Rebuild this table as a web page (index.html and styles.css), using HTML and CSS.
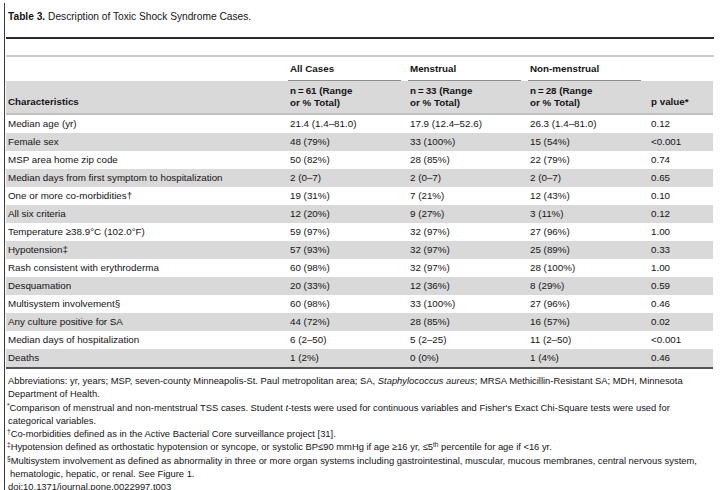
FILE: index.html
```html
<!DOCTYPE html>
<html lang="en">
<head>
<meta charset="utf-8">
<title>Table 3. Description of Toxic Shock Syndrome Cases.</title>
<link rel="stylesheet" href="styles.css">
</head>
<body>
<div class="page">
  <div class="title"><b>Table 3.</b> Description of Toxic Shock Syndrome Cases.</div>
  <div class="rule-dark"></div>
  <div class="rule-light"></div>
  <table class="tbl">
    <colgroup>
      <col class="c1"><col class="c2"><col class="c3"><col class="c4"><col class="c5">
    </colgroup>
    <thead>
      <tr class="groups">
        <th></th>
        <th><div class="grp">All Cases</div></th>
        <th><div class="grp">Menstrual</div></th>
        <th><div class="grp">Non-menstrual</div></th>
        <th></th>
      </tr>
      <tr class="sub">
        <th class="first">Characteristics</th>
        <th>n&#8201;=&#8201;61 (Range<br>or % Total)</th>
        <th>n&#8201;=&#8201;33 (Range<br>or % Total)</th>
        <th>n&#8201;=&#8201;28 (Range<br>or % Total)</th>
        <th class="pv">p value*</th>
      </tr>
    </thead>
    <tbody>
      <tr><td>Median age (yr)</td><td>21.4 (1.4–81.0)</td><td>17.9 (12.4–52.6)</td><td>26.3 (1.4–81.0)</td><td>0.12</td></tr>
      <tr><td>Female sex</td><td>48 (79%)</td><td>33 (100%)</td><td>15 (54%)</td><td>&lt;0.001</td></tr>
      <tr><td>MSP area home zip code</td><td>50 (82%)</td><td>28 (85%)</td><td>22 (79%)</td><td>0.74</td></tr>
      <tr><td>Median days from first symptom to hospitalization</td><td>2 (0–7)</td><td>2 (0–7)</td><td>2 (0–7)</td><td>0.65</td></tr>
      <tr><td>One or more co-morbidities†</td><td>19 (31%)</td><td>7 (21%)</td><td>12 (43%)</td><td>0.10</td></tr>
      <tr><td>All six criteria</td><td>12 (20%)</td><td>9 (27%)</td><td>3 (11%)</td><td>0.12</td></tr>
      <tr><td>Temperature ≥38.9°C (102.0°F)</td><td>59 (97%)</td><td>32 (97%)</td><td>27 (96%)</td><td>1.00</td></tr>
      <tr><td>Hypotension‡</td><td>57 (93%)</td><td>32 (97%)</td><td>25 (89%)</td><td>0.33</td></tr>
      <tr><td>Rash consistent with erythroderma</td><td>60 (98%)</td><td>32 (97%)</td><td>28 (100%)</td><td>1.00</td></tr>
      <tr><td>Desquamation</td><td>20 (33%)</td><td>12 (36%)</td><td>8 (29%)</td><td>0.59</td></tr>
      <tr><td>Multisystem involvement§</td><td>60 (98%)</td><td>33 (100%)</td><td>27 (96%)</td><td>0.46</td></tr>
      <tr><td>Any culture positive for SA</td><td>44 (72%)</td><td>28 (85%)</td><td>16 (57%)</td><td>0.02</td></tr>
      <tr><td>Median days of hospitalization</td><td>6 (2–50)</td><td>5 (2–25)</td><td>11 (2–50)</td><td>&lt;0.001</td></tr>
      <tr><td>Deaths</td><td>1 (2%)</td><td>0 (0%)</td><td>1 (4%)</td><td>0.46</td></tr>
    </tbody>
  </table>
  <div class="notes">
    <p class="plain">Abbreviations: yr, years; MSP, seven-county Minneapolis-St. Paul metropolitan area; SA, <i>Staphylococcus aureus</i>; MRSA Methicillin-Resistant SA; MDH, Minnesota<br>Department of Health.</p>
    <p class="mark"><sup>*</sup>Comparison of menstrual and non-mentstrual TSS cases. Student <i>t</i>-tests were used for continuous variables and Fisher's Exact Chi-Square tests were used for<br>categorical variables.</p>
    <p class="mark"><sup>†</sup>Co-morbidities defined as in the Active Bacterial Core surveillance project [31].</p>
    <p class="mark"><sup>‡</sup>Hypotension defined as orthostatic hypotension or syncope, or systolic BP≤90 mmHg if age ≥16 yr, ≤5<sup>th</sup> percentile for age if &lt;16 yr.</p>
    <p class="mark hang"><sup>§</sup>Multisystem involvement as defined as abnormality in three or more organ systems including gastrointestinal, muscular, mucous membranes, central nervous system,<br>hematologic, hepatic, or renal. See Figure 1.</p>
    <p class="plain">doi:10.1371/journal.pone.0022997.t003</p>
  </div>
</div>
</body>
</html>
```
FILE: styles.css
```css
html, body {
  margin: 0;
  padding: 0;
  background: #ffffff;
}

body {
  font-family: "Liberation Sans", Arial, sans-serif;
  color: #141414;
  font-size: 10px;
}

.page {
  margin: 3px 0 0 4px;
  border-left: 1px solid #3a3a3a;
  padding-left: 1px;
  width: 708px;
  min-height: 492px;
}

.title {
  padding: 6px 0 0 2px;
  font-size: 10.2px;
  line-height: 16px;
}

.rule-dark {
  margin-top: 12px;
  height: 2px;
  background: #2a2a2a;
}

.rule-light {
  margin-top: 16px;
  height: 2px;
  background: #cbcbcb;
}

.tbl {
  width: 707px;
  table-layout: fixed;
  border-collapse: separate;
  border-spacing: 0;
  font-size: 9.8px;
}

.c1 { width: 282px; }
.c2 { width: 120px; }
.c3 { width: 120px; }
.c4 { width: 120px; }
.c5 { width: 65px; }

.tbl th {
  font-weight: bold;
  text-align: left;
  padding: 0;
}

.groups th {
  height: 24px;
  vertical-align: bottom;
  padding-right: 7px;
}

.grp {
  line-height: 12px;
  padding: 0 0 5px 2px;
  border-bottom: 1px solid #8f8f8f;
}

.sub th {
  background: #d9d9d9;
  height: 32px;
  box-sizing: border-box;
  padding: 4px 0 4px 2px;
  line-height: 12px;
  vertical-align: top;
  border-bottom: 2px solid #c2c2c2;
}

.sub th.first,
.sub th.pv {
  vertical-align: bottom;
  padding-bottom: 5px;
}

.sub th.pv {
  padding-left: 3px;
}

.tbl td {
  height: 18px;
  padding: 0 0 0 2px;
  line-height: 18px;
  white-space: nowrap;
  vertical-align: middle;
}

.tbl td:last-child {
  padding-left: 3px;
}

.tbl tbody tr:nth-child(even) td {
  background: #d9d9d9;
}

.tbl tbody tr:last-child td {
  border-bottom: 2px solid #555555;
}

.notes {
  margin-top: 5px;
  font-size: 9.4px;
  line-height: 13.3px;
}

.notes p {
  margin: 0;
  white-space: nowrap;
}

.notes .plain {
  padding-left: 2px;
}

.notes .mark {
  padding-left: 2px;
  text-indent: -1px;
}

.notes .hang {
  padding-left: 4px;
  text-indent: -3px;
}

.notes sup {
  font-size: 6.5px;
  line-height: 0;
  vertical-align: 3px;
}
```
